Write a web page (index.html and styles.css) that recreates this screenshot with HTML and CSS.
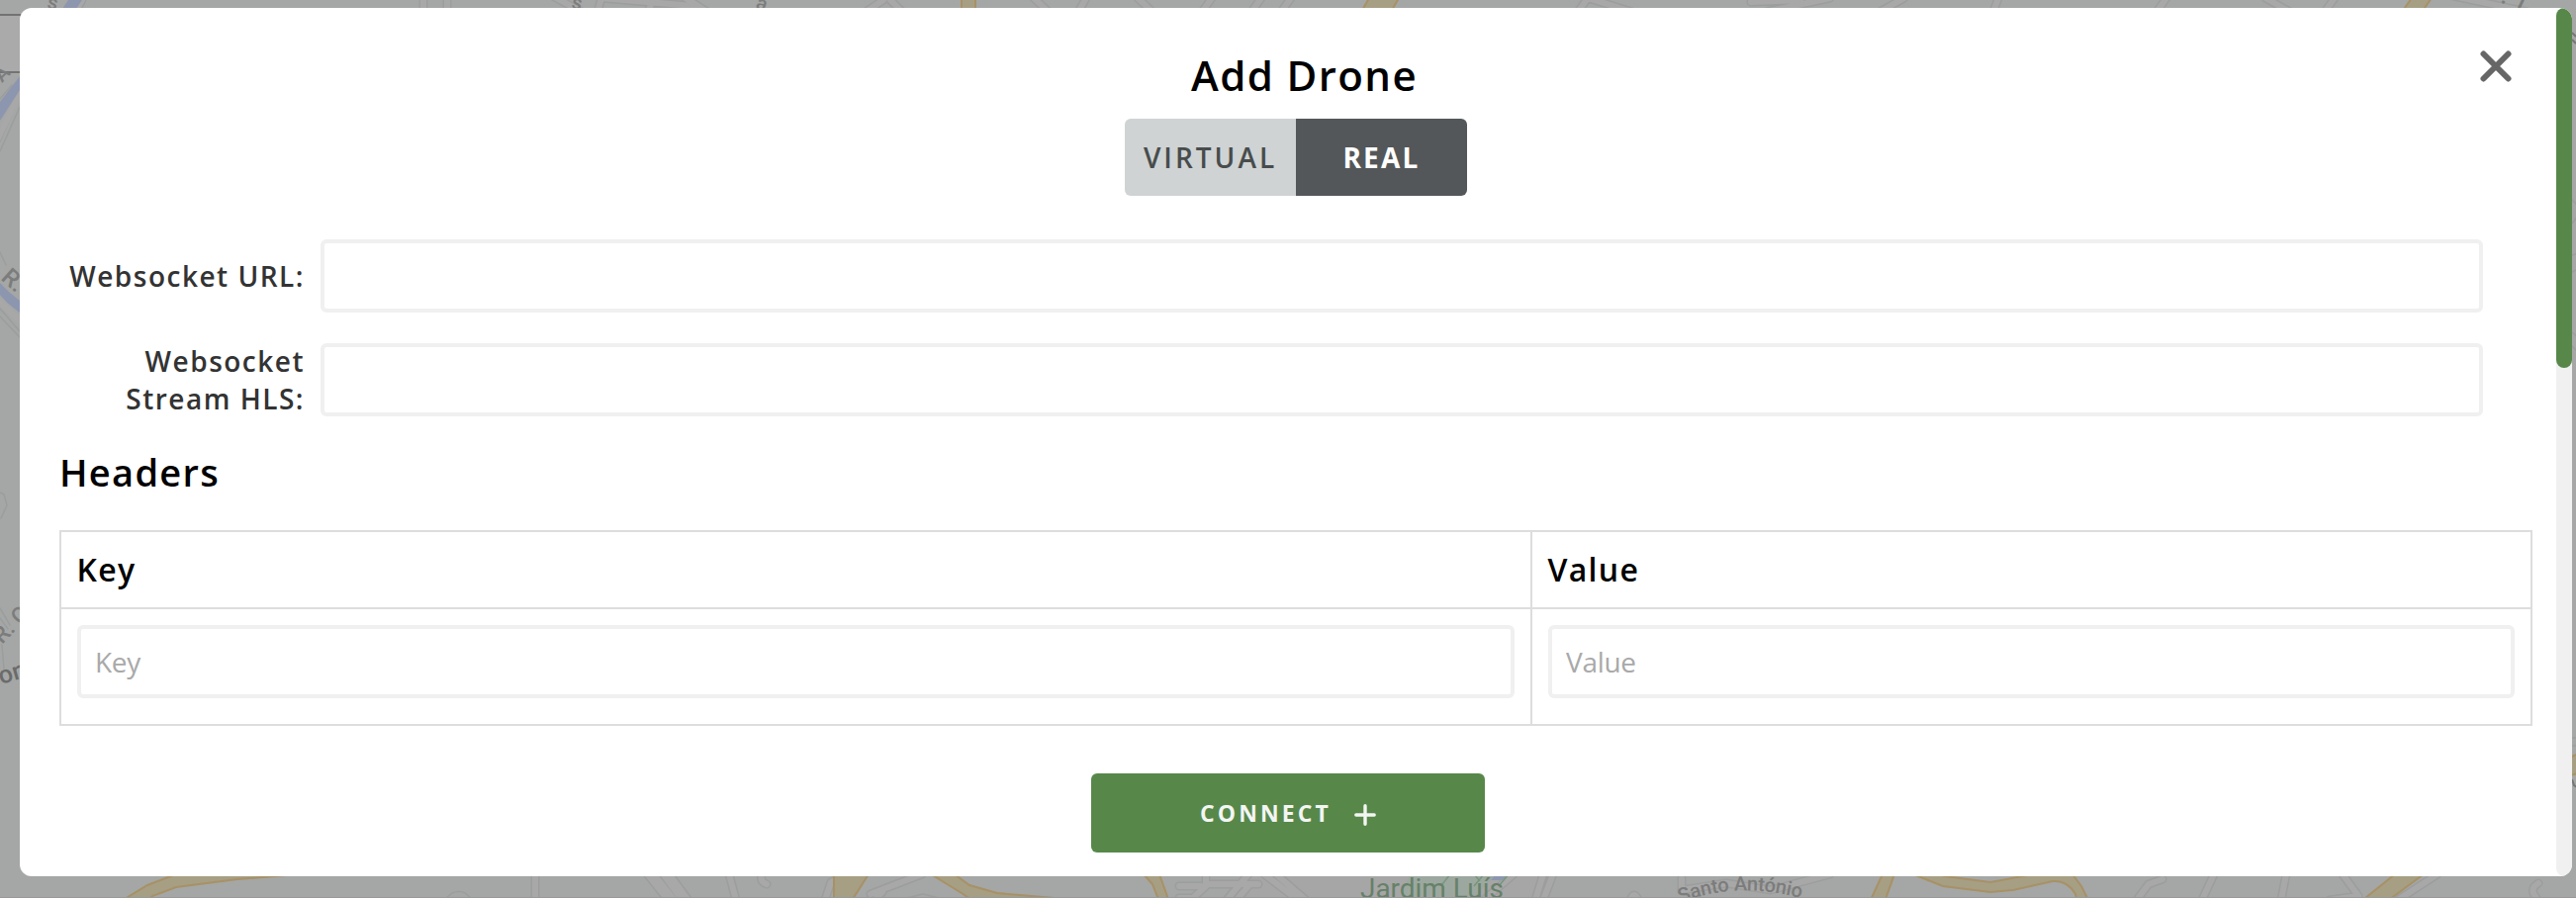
FILE: index.html
```html
<!DOCTYPE html>
<html lang="en">
<head>
<meta charset="utf-8">
<title>Add Drone</title>
<link rel="stylesheet" href="styles.css">
</head>
<body>
<svg class="map" viewBox="0 0 2604 908" aria-hidden="true">
  <rect class="land" width="2604" height="908"/>
  <path class="block" d="M1250 880H1400L1430 886H1560L1545 908H1250ZM2598 0h6v700h-6z"/>
  <!-- top edge -->
  <g class="casing"><path d="M83 0L75 14M428 0V12M452 0V12M555 -6L588 12M604 12L608 -2L700 6M660 0L655 12M690 -4L715 12M875 12L893 0M912 12L900 0M1045 -2L1060 12M1090 12L1098 -2M1150 -2L1165 12M1215 12L1225 -2M1265 12L1275 -2M1295 12L1305 -2M1595 12L1605 -2L1650 12M1770 2L1820 0M1785 12L1850 -2M1900 12L1925 -2M2015 12L2020 -2M2180 12L2190 -2M2290 -2L2315 12M2350 12L2360 -2M2480 -4L2555 12"/></g>
  <g class="road"><path d="M83 0L75 14M428 0V12M452 0V12M555 -6L588 12M604 12L608 -2L700 6M660 0L655 12M690 -4L715 12M875 12L893 0M912 12L900 0M1045 -2L1060 12M1090 12L1098 -2M1150 -2L1165 12M1215 12L1225 -2M1265 12L1275 -2M1295 12L1305 -2M1595 12L1605 -2L1650 12M1770 2L1820 0M1785 12L1850 -2M1900 12L1925 -2M2015 12L2020 -2M2180 12L2190 -2M2290 -2L2315 12M2350 12L2360 -2M2480 -4L2555 12"/></g>
  <path class="water" d="M69 0h14l-6 9h-14z"/>
  <g class="avenue">
    <path d="M972 -2h14v12h-14zM1384 -2h30l-8 14h-30zM2438 -2h20l-10 14h-20z"/>
  </g>
  <g class="street"><text x="47" y="8" font-size="20" transform="rotate(12 47 8)">s</text><text x="577" y="8" font-size="20" transform="rotate(12 577 8)">s</text><text x="763" y="8" font-size="20" transform="rotate(20 763 8)">a</text><text x="2527" y="2" font-size="24" transform="rotate(25 2527 2)">. 1</text></g>
  <!-- left edge -->
  <path class="casing thin" d="M0 153L20 108M0 143L20 97M0 100L12 86M0 255L6 268M0 312L20 335M0 320L20 341M0 498l4 2 3 11-6 13M0 615L10 632M0 625L8 636M2 652L4 676"/>
  <path class="road" d="M-2 140L22 90M-4 302L22 326"/>
  <path class="water" d="M0 103L20 77V91L0 122zM0 286C5 291 8 295 20 304V316C10 309 5 304 0 298z"/>
  <rect class="control" x="0" y="14" width="24" height="61"/>
  <path class="control-edge" d="M0 15H22M0 73H22"/>
  <g class="street">
    <text x="2" y="84" font-size="20" transform="rotate(-45 2 84)">A</text>
    <text x="0" y="282" font-size="24" transform="rotate(42 0 282)">R. C</text>
    <text x="2" y="652" font-size="23" transform="rotate(-46 2 652)">R. C</text>
    <text class="strong" x="1" y="692" font-size="25" transform="rotate(-16 1 692)">on</text>
  </g>
  <!-- right edge -->
  <path class="casing thin" d="M2600 202l6 6M2600 226l6-8M2600 258l6-2M2600 275l6-3M2600 336l6 5M2600 350l6 6M2600 746h4M2600 754h4"/>
  <path class="avenue" d="M2598 766l8-4v20l-8 2z"/>
  <path class="street-mark" d="M2600 33l4 4M2600 40l4 4M2600 788l2 6 3 2"/>
  <!-- bottom edge -->
  <g class="casing">
    <path class="wide" d="M656 882L680 912M672 882L694 912"/>
    <path d="M541 884V910M737 884L744 910M770 884q-2 8 5 10M834 910L840 892L860 884M880 904L932 884M884 910L892 902M1192 908H1206L1219 896V884M1192 896H1214M1219 894H1272M1240 910L1262 884M1290 884L1320 910M1312 910L1278 884M1250 910L1262 896M1700 901V888M1700 900L1745 893L1790 900L1850 884M1560 884L1552 910M1570 884L1560 910M1500 910L1530 884M1648 910q4-10 8 0M2160 910L2172 894L2186 889M2226 910L2238 884M2306 910L2311 884M2368 884L2384 906L2355 910M2424 910L2464 884M2566 893q-10 6-2 15"/>
  </g>
  <g class="road">
    <path class="wide" d="M656 882L680 912M672 882L694 912"/>
    <path d="M541 884V910M737 884L744 910M770 884q-2 8 5 10M834 910L840 892L860 884M880 904L932 884M884 910L892 902M1192 908H1206L1219 896V884M1192 896H1214M1219 894H1272M1240 910L1262 884M1290 884L1320 910M1312 910L1278 884M1250 910L1262 896M1700 901V888M1700 900L1745 893L1790 900L1850 884M1560 884L1552 910M1570 884L1560 910M1500 910L1530 884M1648 910q4-10 8 0M2160 910L2172 894L2186 889M2226 910L2238 884M2306 910L2311 884M2368 884L2384 906L2355 910M2424 910L2464 884M2566 893q-10 6-2 15"/>
  </g>
  <path class="casing thin" d="M451 908l6-5q7-3 13 0l6 5M917 908l16-4 16 4"/>
  <path class="park" d="M1425 884H1512L1490 908H1415z"/>
  <path class="water" d="M1512 884h12l-5 6h-12z"/>
  <path class="trail" d="M1466 884l-8 10M1490 884l6 7M1500 884l-10 12M1525 884l-10 12"/>
  <g class="avenue">
    <path d="M126 909L149 895L175 885H290L240 889L178 897L154 906L148 912z"/>
    <path d="M843 884H878L862 909H843zM938 882H962L980 895L1008 903L1065 908V912H985L972 903zM1156 884H1172L1182 912H1172L1165 894z"/>
    <path d="M1900 884H1915L1905 912H1890L1903 884zM1934 884L1964 896L2012 902L2035 900L2075 891Q2090 890 2098 904L2100 912H2112L2104 896L2095 884H2055L2012 892L1966 886L1955 882z"/>
    <path d="M2421 884H2450L2412 912H2386z"/>
  </g>
  <text class="place" x="1375" y="907.5" font-size="28" textLength="145" lengthAdjust="spacingAndGlyphs">Jardim Luís</text>
  <path id="antonio" fill="none" d="M1699 913Q1755 890 1824 909"/>
  <text class="street" font-size="20"><textPath href="#antonio" textLength="124">Santo António</textPath></text>
  <path class="bottom-line" d="M0 907.5H2604"/>
</svg>

<div class="overlay">
  <div class="modal" role="dialog" aria-labelledby="title">
    <div class="content">
      <button class="close" aria-label="Close"><svg viewBox="0 0 32 32"><path d="M3.5 3.5L28.5 28.5M28.5 3.5L3.5 28.5"/></svg></button>
      <h1 class="title" id="title">Add Drone</h1>
      <div class="toggle">
        <button class="option">VIRTUAL</button>
        <button class="option selected">REAL</button>
      </div>
      <div class="field">
        <label class="label" for="url">Websocket URL:</label>
        <input class="input" id="url" type="text">
      </div>
      <div class="field">
        <label class="label" for="hls">Websocket<br>Stream HLS:</label>
        <input class="input" id="hls" type="text">
      </div>
      <h2 class="subtitle">Headers</h2>
      <div class="table">
        <div class="cell head">Key</div>
        <div class="cell head">Value</div>
        <div class="cell"><input class="input" type="text" placeholder="Key"></div>
        <div class="cell"><input class="input" type="text" placeholder="Value"></div>
      </div>
      <button class="connect"><span class="connect-text">CONNECT</span><svg class="plus" viewBox="0 0 22 22"><path d="M11 1.8V20.2M1.8 11H20.2"/></svg></button>
    </div>
    <div class="scrollbar"><div class="thumb"></div></div>
  </div>
</div>
</body>
</html>
```

FILE: styles.css
```css
* { box-sizing: border-box; }

body {
  margin: 0;
  width: 2604px;
  height: 908px;
  overflow: hidden;
  background: #a5a7a6;
  font-family: "Open Sans", "Noto Sans", sans-serif;
}

button, input { font-family: inherit; }
button { border: 0; padding: 0; }

/* map behind the dialog */
.map { position: absolute; inset: 0; width: 2604px; height: 908px; }
.land { fill: #a4a7a5; }
.block { fill: #a6a6a6; }
.casing { fill: none; stroke: #9c9d9d; stroke-width: 9; stroke-linecap: round; stroke-linejoin: round; }
.road { fill: none; stroke: #a8a8a8; stroke-width: 6; stroke-linecap: round; stroke-linejoin: round; }
.casing .wide { stroke-width: 14; }
.road .wide { stroke-width: 11; }
.casing.thin { stroke-width: 1.5; }
.water { fill: #8d96af; }
.park { fill: #9ca89f; }
.trail { fill: none; stroke: #76977b; stroke-width: 1.5; }
.avenue { fill: #a69f84; stroke: #a89166; stroke-width: 2; }
.control { fill: #aaa; }
.control-edge { fill: none; stroke: #737373; stroke-width: 2; }
.street { fill: #7c7c7c; font-family: Roboto, sans-serif; font-weight: 500; }
.strong { fill: #6b6b6b; }
.street-mark { fill: none; stroke: #777; stroke-width: 2; }
.place { fill: #668169; font-family: Roboto, sans-serif; }
.bottom-line { stroke: #999; stroke-width: 1; }

/* dialog */
.overlay { position: relative; height: 908px; padding: 8px 4px 22px 20px; }
.modal {
  display: flex;
  height: 878px;
  border-radius: 12px;
  background: #fff;
  overflow: hidden;
}
.content {
  position: relative;
  flex: 1;
  display: flex;
  flex-direction: column;
  padding: 40px 24px 0 40px;
}
.close {
  position: absolute;
  top: 43px;
  right: 45px;
  width: 32px;
  height: 32px;
  background: none;
}
.close svg { display: block; width: 32px; height: 32px; fill: none; stroke: #666; stroke-width: 6; stroke-linecap: round; }
.title {
  margin: -1px 0 0;
  height: 73px;
  padding-left: 17px;
  line-height: 58px;
  text-align: center;
  font-size: 42px;
  font-weight: 600;
  letter-spacing: 1.4px;
  color: #000;
}
.toggle {
  display: flex;
  align-self: center;
  width: 346px;
  height: 78px;
  border-radius: 6px;
  overflow: hidden;
}
.option {
  flex: 1;
  background: #cfd3d4;
  color: #484c4c;
  font-size: 28px;
  font-weight: 600;
  letter-spacing: 3px;
}
.selected { background: #535759; color: #fff; font-weight: 700; letter-spacing: 2.2px; }
.field {
  display: flex;
  align-items: center;
  height: 74px;
  margin: 44px 50px 0 0;
}
.field + .field { margin-top: 31px; }
.label {
  width: 248px;
  margin-right: 16px;
  text-align: right;
  font-size: 28px;
  line-height: 38px;
  font-weight: 600;
  letter-spacing: 1.5px;
  color: #333;
}
.input {
  display: block;
  flex: 1;
  width: 100%;
  height: 74px;
  padding: 0 14px;
  border: 4px solid #f0f0f0;
  border-radius: 6px;
  background: #fff;
  font-size: 28px;
  letter-spacing: -0.3px;
  color: #333;
  outline: 0;
}
.input::placeholder { color: #a9a9a9; opacity: 1; }
.subtitle {
  margin: 29px 0 32px;
  font-size: 38px;
  line-height: 54px;
  font-weight: 600;
  letter-spacing: 1.3px;
  color: #000;
}
.table {
  display: grid;
  grid-template-columns: 1485px 1009px;
  grid-template-rows: 76px 116px;
  gap: 2px;
  width: 2500px;
  height: 198px;
  border: 2px solid #ddd;
  background: #ddd;
}
.cell { padding: 16px; background: #fff; }
.head {
  padding: 0 15.5px;
  font-size: 32px;
  line-height: 76px;
  font-weight: 600;
  letter-spacing: 1.3px;
  color: #000;
}
.connect {
  display: flex;
  align-items: center;
  justify-content: center;
  width: 398px;
  height: 80px;
  margin: 48px 0 0 1043px;
  border-radius: 6px;
  background: #57884a;
  color: #f3f5f3;
  font-size: 23px;
  font-weight: 700;
}
.connect-text { letter-spacing: 3.1px; }
.plus { width: 22px; height: 22px; margin: 4px 0 0 23px; fill: none; stroke: #f3f5f3; stroke-width: 3.4; stroke-linecap: round; }
.scrollbar { width: 16px; background: #f0f0f0; border-radius: 8px; }
.thumb { height: 364px; border-radius: 8px; background: #57884a; }
```
